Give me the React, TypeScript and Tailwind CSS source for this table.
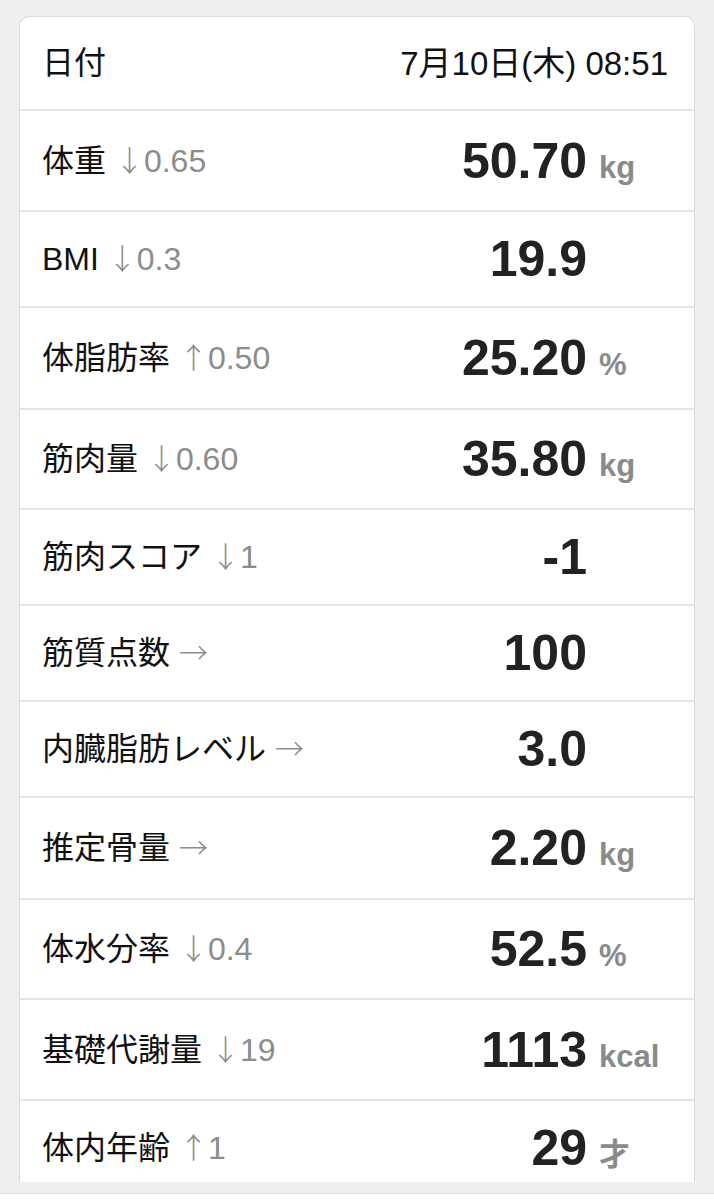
import React from 'react'

type Row = {
  label: string
  arrow: string
  delta?: string
  value: string
  unit?: string
  h: string
}

const rows: Row[] = [
  { label: '体重', arrow: '↓', delta: '0.65', value: '50.70', unit: 'kg', h: 'h-[101px]' },
  { label: 'BMI', arrow: '↓', delta: '0.3', value: '19.9', h: 'h-[96px]' },
  { label: '体脂肪率', arrow: '↑', delta: '0.50', value: '25.20', unit: '%', h: 'h-[102px]' },
  { label: '筋肉量', arrow: '↓', delta: '0.60', value: '35.80', unit: 'kg', h: 'h-[100px]' },
  { label: '筋肉スコア', arrow: '↓', delta: '1', value: '-1', h: 'h-[96px]' },
  { label: '筋質点数', arrow: '→', value: '100', h: 'h-[96px]' },
  { label: '内臓脂肪レベル', arrow: '→', value: '3.0', h: 'h-[96px]' },
  { label: '推定骨量', arrow: '→', value: '2.20', unit: 'kg', h: 'h-[102px]' },
  { label: '体水分率', arrow: '↓', delta: '0.4', value: '52.5', unit: '%', h: 'h-[100px]' },
  { label: '基礎代謝量', arrow: '↓', delta: '19', value: '1113', unit: 'kcal', h: 'h-[101px]' },
  { label: '体内年齢', arrow: '↑', delta: '1', value: '29', unit: '才', h: 'h-[96px]' },
]

const font = 'font-["Liberation_Sans","Noto_Sans_CJK_JP",sans-serif]'

function MetricRow({ row }: { row: Row }) {
  return (
    <div className={`flex shrink-0 items-center border-b-2 border-[#e4e4e4] pl-[22px] ${row.h}`}>
      <div className="flex-1 whitespace-nowrap text-[32px] leading-none text-[#111]">
        {row.label}
        <span className="text-[32px] text-[#8c8c8c]">
          {' '}
          <span className='font-["Noto_Sans_CJK_JP"] text-[29px] font-light'>{row.arrow}</span>
          {row.delta}
        </span>
      </div>
      <div className="flex items-baseline">
        <div className="text-right text-[50px] font-bold leading-none text-[#222]">{row.value}</div>
        <div className="w-[107px] shrink-0 pl-3 text-[31px] font-bold leading-none text-[#8a8a8a]">
          {row.unit ?? ''}
        </div>
      </div>
    </div>
  )
}

export default function App() {
  return (
    <div className={`h-[1200px] overflow-hidden bg-[#efefef] pt-4 ${font}`}>
      <div className="mx-[19px] flex h-[1166px] flex-col overflow-hidden rounded-t-[10px] border border-b-0 border-[#dcdcdc] bg-white">
        <div className="flex h-[94px] shrink-0 items-center justify-between border-b-2 border-[#e4e4e4] pl-[22px] pr-[26px] text-[33px] leading-none text-[#111]">
          <span className="text-[32px]">日付</span>
          <span>7月10日(木) 08:51</span>
        </div>
        {rows.map(r => (
          <MetricRow key={r.label} row={r} />
        ))}
      </div>
      <div className="mt-[11px] h-[20px] border-t border-[#dcdcdc] bg-white" />
    </div>
  )
}
